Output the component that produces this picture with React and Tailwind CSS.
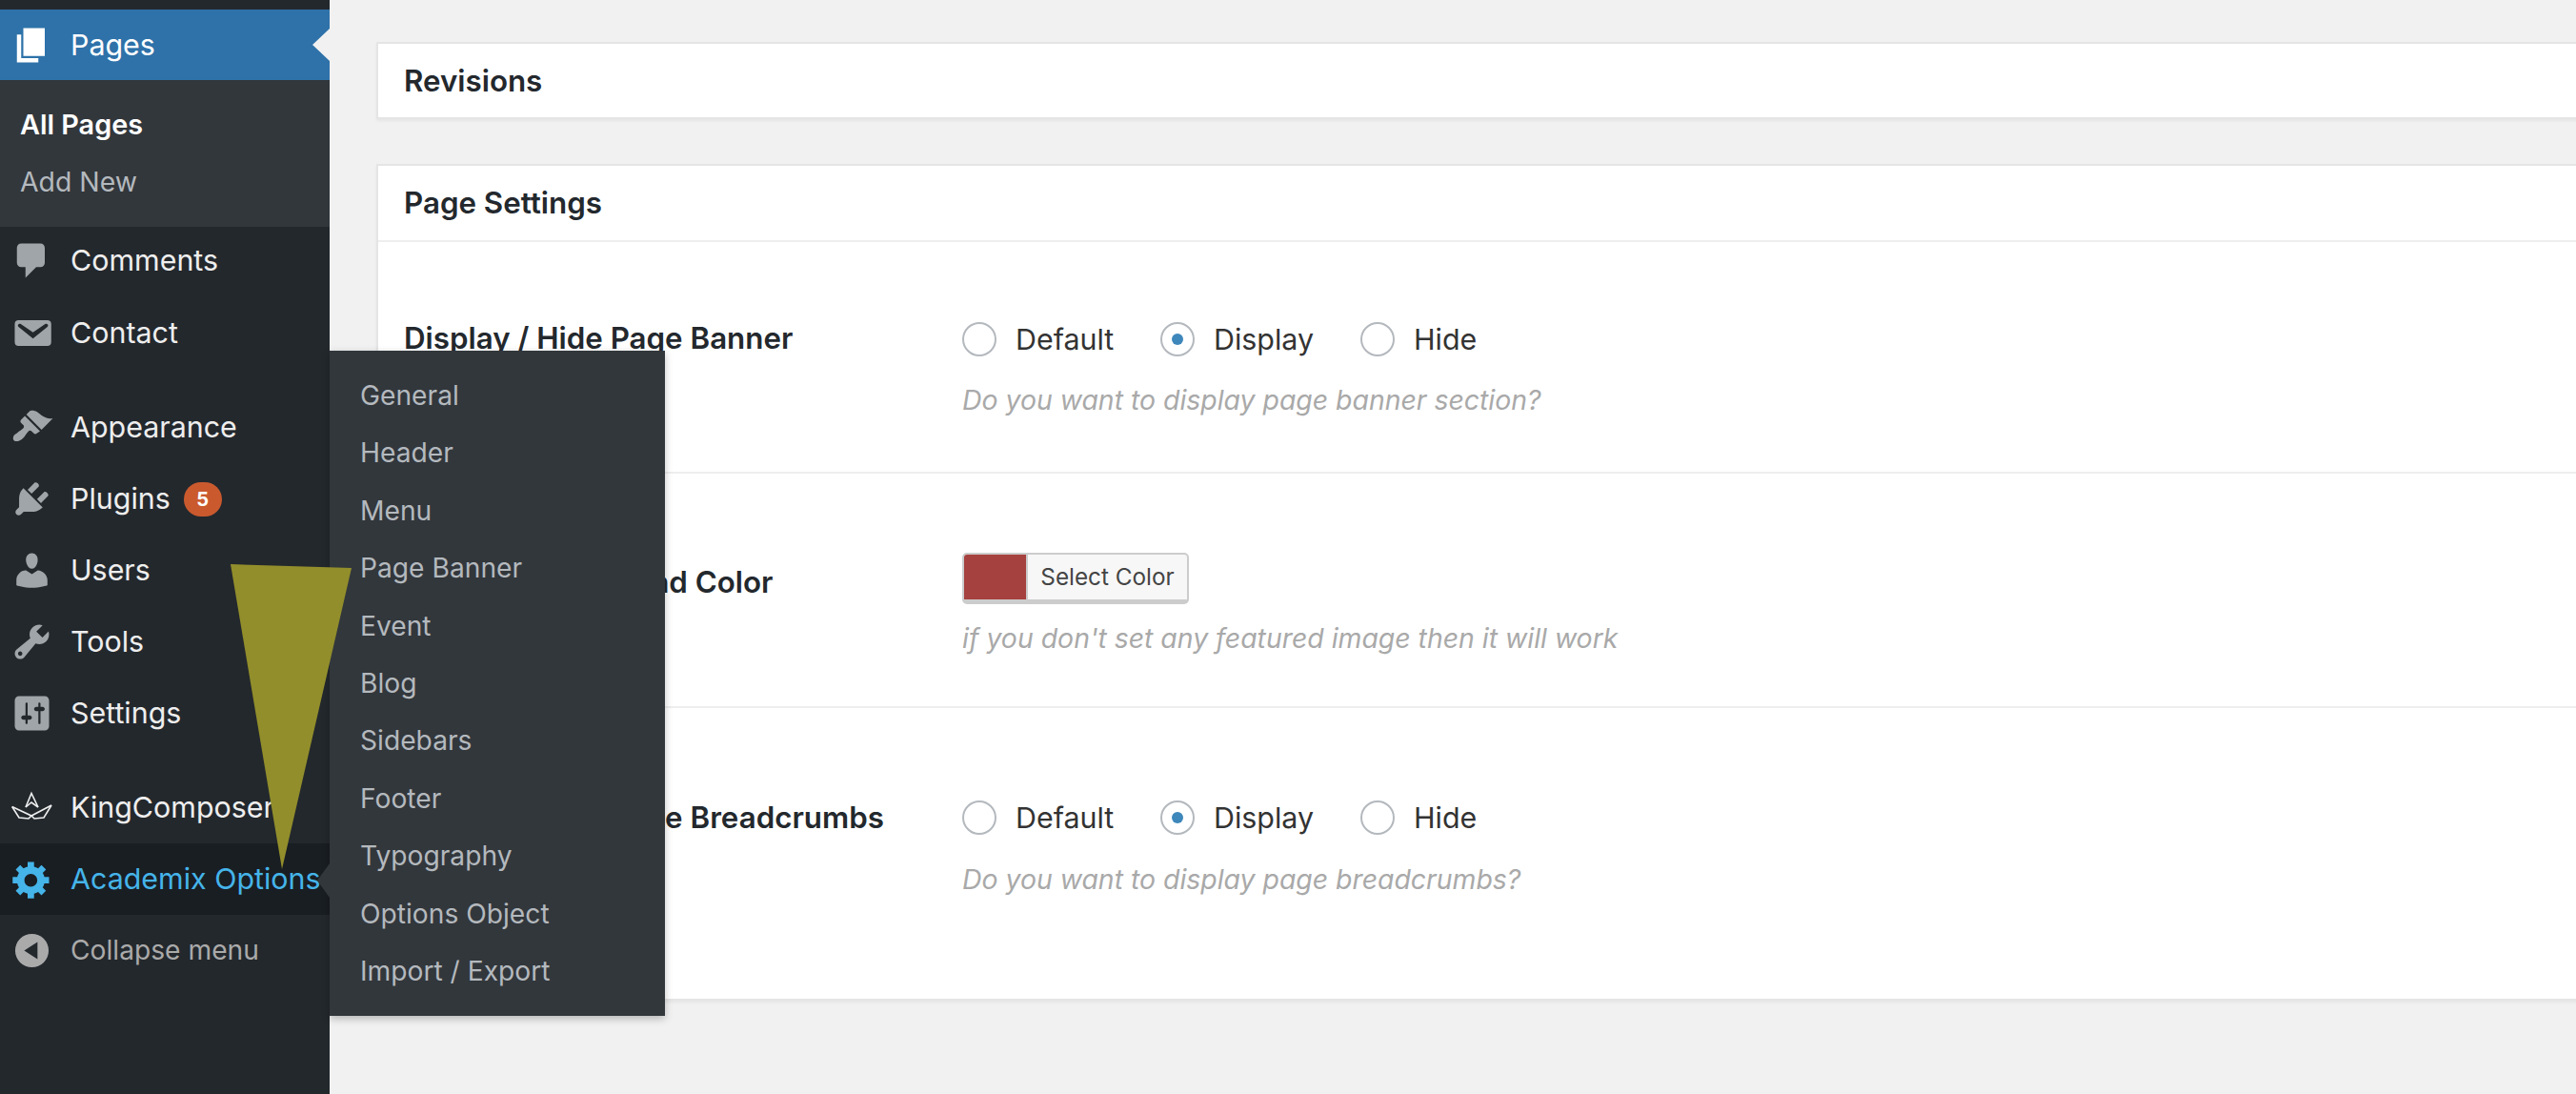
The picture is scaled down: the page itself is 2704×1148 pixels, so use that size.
import React from 'react';

const paths = {
  page: "M6 15V2h10v13H6zm-1 1h8v2H3V5h2v11z",
  comments: "M5 2h9c1.1 0 2 .9 2 2v7c0 1.1-.9 2-2 2h-2l-5 5v-5H5c-1.1 0-2-.9-2-2V4c0-1.1.9-2 2-2z",
  email: "M3.87 4h13.25C18.37 4 19 4.59 19 5.79v8.42c0 1.19-.63 1.79-1.88 1.79H3.87c-1.25 0-1.88-.6-1.88-1.79V5.79c0-1.2.63-1.79 1.88-1.79zm6.62 8.6l6.74-5.53c.24-.2.43-.66.13-1.07-.29-.41-.82-.42-1.17-.17l-5.7 3.86L4.8 5.83c-.35-.25-.88-.24-1.17.17-.3.41-.11.87.13 1.07z",
  brush: "M14.48 11.06L7.41 3.99l1.5-1.5c.5-.56 2.3-.47 3.51.32 1.21.8 1.43 1.28 2.91 2.1 1.18.64 2.45 1.26 4.45.85zm-.71.71L6.7 4.7 4.93 6.47c-.39.39-.39 1.02 0 1.41l1.06 1.06c.39.39.39 1.03 0 1.42-.6.6-1.43 1.11-2.21 1.69-.35.26-.7.53-1.01.84C1.43 13.23.78 15.24 1.65 16.1c.87.87 2.88.22 4.23-1.12.31-.31.58-.66.85-1.01.58-.78 1.09-1.61 1.69-2.21.39-.39 1.02-.39 1.41 0l1.06 1.06c.39.39 1.02.39 1.41 0z",
  plug: "M13.11 4.36L9.87 7.6 8 5.73l3.24-3.24c.35-.34 1.05-.2 1.56.32.52.51.66 1.21.31 1.55zm-8 1.77l.91-1.12 9.01 9.01-1.19.84c-.71.71-2.63 1.16-3.82 1.16H6.14L4.9 17.26c-.59.59-1.54.59-2.12 0-.59-.58-.59-1.53 0-2.12l1.24-1.24v-3.88c0-1.13.4-3.19 1.09-3.89zm7.26 3.97l3.24-3.24c.34-.35 1.04-.21 1.55.31.52.51.66 1.21.31 1.55l-3.24 3.25z",
  user: "M10 9.25c-2.27 0-2.73-3.44-2.73-3.44C7 4.02 7.82 2 9.97 2c2.16 0 2.98 2.02 2.71 3.81 0 0-.41 3.44-2.68 3.44zm0 2.57L12.72 10c2.39 0 4.52 2.33 4.52 4.53v2.49s-3.65 1.13-7.24 1.13c-3.65 0-7.24-1.13-7.24-1.13v-2.49c0-2.25 1.94-4.48 4.47-4.48z",
  wrench: "M16.68 9.77c-1.34 1.34-3.3 1.67-4.95.99l-5.41 6.52c-.99.99-2.59.99-3.58 0s-.99-2.59 0-3.57l6.52-5.42c-.68-1.65-.35-3.61.99-4.95 1.28-1.28 3.12-1.62 4.72-1.06l-2.89 2.89 2.82 2.82 2.86-2.87c.53 1.58.18 3.39-1.08 4.65zM3.81 16.21c.4.39 1.04.39 1.43 0 .4-.4.4-1.04 0-1.43-.39-.4-1.03-.4-1.43 0-.39.39-.39 1.03 0 1.43z",
  sliders: "M18 16V4c0-1.1-.9-2-2-2H4c-1.1 0-2 .9-2 2v12c0 1.1.9 2 2 2h12c1.1 0 2-.9 2-2zM8 11h1c.55 0 1 .45 1 1s-.45 1-1 1H8v1.5c0 .28-.22.5-.5.5s-.5-.22-.5-.5V13H6c-.55 0-1-.45-1-1s.45-1 1-1h1V5.5c0-.28.22-.5.5-.5s.5.22.5.5V11zm5-2h-1c-.55 0-1-.45-1-1s.45-1 1-1h1V5.5c0-.28.22-.5.5-.5s.5.22.5.5V7h1c.55 0 1 .45 1 1s-.45 1-1 1h-1v5.5c0 .28-.22.5-.5.5s-.5-.22-.5-.5V9z",
  gear: "M18 12h-2.18c-.17.7-.44 1.35-.81 1.93l1.54 1.54-2.1 2.1-1.54-1.54c-.58.36-1.23.63-1.91.79V19H8v-2.18c-.68-.16-1.33-.43-1.91-.79l-1.54 1.54-2.12-2.12 1.54-1.54c-.36-.58-.63-1.23-.79-1.91H1V9.03h2.17c.16-.7.44-1.35.8-1.94L2.43 5.55l2.1-2.1 1.54 1.54c.58-.37 1.24-.64 1.93-.81V2h3v2.18c.68.16 1.33.43 1.91.79l1.54-1.54 2.12 2.12-1.54 1.54c.36.59.64 1.24.8 1.94H18V12zm-8.5 1.5c1.66 0 3-1.34 3-3s-1.34-3-3-3-3 1.34-3 3 1.34 3 3 3z",
  collapse: "M10 2.2a7.8 7.8 0 1 0 0 15.6a7.8 7.8 0 0 0 0-15.6zM12.6 6v8L6.4 10z",
};

const Icon = ({ name, className }) => (
  <svg viewBox="0 0 20 20" className={"w-[45px] h-[45px] shrink-0 fill-current " + className}>
    <path fillRule="evenodd" d={paths[name]} />
  </svg>
);

const Crown = () => (
  <svg viewBox="0 0 45 45" className="w-[45px] h-[45px] shrink-0 fill-none stroke-[#eeeeee] stroke-[1.6]">
    <path d="M16 22 L22 7.5 L29 22" />
    <path d="M1.7 21.5 L9 33 L19 34 L22 31 L25 34 L35 33 L43 20" />
    <path d="M1.7 21.5 L22 31 L43 20" />
    <path d="M16 22 L22 17 L29 22" />
  </svg>
);

const MenuRow = ({ icon, label, iconClass = "text-[#a0a5aa]", textClass = "text-[#eeeeee] text-[30.4px]", className = "", children, custom }) => (
  <div className={"flex items-center h-[75px] pl-[11px] " + className}>
    {custom ? custom : <Icon name={icon} className={iconClass} />}
    <span className={"ml-[18px] leading-none whitespace-nowrap " + textClass}>{label}</span>
    {children}
  </div>
);

const flyoutItems = ["General", "Header", "Menu", "Page Banner", "Event", "Blog", "Sidebars", "Footer", "Typography", "Options Object", "Import / Export"];

const Radios = () => (
  <div className="flex items-center h-[36px] text-[30.4px] leading-none text-[#333333]">
    <span className="w-[36px] h-[36px] rounded-full border-2 border-[#b4b9be] bg-white" />
    <span className="ml-[20px] w-[152px]">Default</span>
    <span className="w-[36px] h-[36px] rounded-full border-2 border-[#b4b9be] bg-white flex items-center justify-center">
      <span className="w-[12px] h-[12px] rounded-full bg-[#3d87bb]" />
    </span>
    <span className="ml-[20px] w-[154px]">Display</span>
    <span className="w-[36px] h-[36px] rounded-full border-2 border-[#b4b9be] bg-white" />
    <span className="ml-[20px]">Hide</span>
  </div>
);

const Hint = ({ children }) => (
  <p className="text-[28.4px] leading-none italic text-[#a9a9a9] whitespace-nowrap">{children}</p>
);

const SettingRow = ({ label, hint, children, className = "", labelClass = "" }) => (
  <div className={"flex border-b-2 border-[#eeeeee] last:border-b-0 " + className}>
    <div className={"w-[613px] shrink-0 pl-[27px] h-[36px] flex items-center text-[31.3px] leading-none font-semibold text-[#23282d] whitespace-nowrap " + labelClass}>
      {label}
    </div>
    <div className="flex flex-col">
      {children}
      <Hint>{hint}</Hint>
    </div>
  </div>
);

export default function App() {
  return (
    <div className="relative flex w-[2704px] h-[1148px] overflow-hidden bg-[#f1f1f1] font-['Inter','Liberation_Sans',sans-serif]">
      <aside className="w-[346px] shrink-0 bg-[#23282d] pt-[10px]">
        <div className="relative flex items-center h-[74px] pl-[11px] bg-[#2e72a9]">
          <Icon name="page" className="text-white" />
          <span className="ml-[18px] text-[30.4px] leading-none text-white">Pages</span>
          <span className="absolute right-0 top-[20px] border-y-[17px] border-r-[18px] border-y-transparent border-r-[#f1f1f1]" />
        </div>
        <div className="h-[154px] bg-[#32373c] pl-[21px] pt-[33px] leading-none">
          <div className="h-[60px] text-[28.8px] font-semibold text-white">All Pages</div>
          <div className="text-[28.4px] text-[#b4b9be]">Add New</div>
        </div>
        <div className="pb-[23px]">
          <MenuRow icon="comments" label="Comments" className="h-[73px] pb-[4px]" />
          <MenuRow icon="email" label="Contact" className="pb-[2px]" />
        </div>
        <MenuRow icon="brush" label="Appearance" />
        <MenuRow icon="plug" label="Plugins">
          <span className="ml-[14px] flex items-center justify-center w-[40px] h-[36px] rounded-full bg-[#ca5a2e] text-white text-[20px] font-bold leading-none">5</span>
        </MenuRow>
        <MenuRow icon="user" label="Users" />
        <MenuRow icon="wrench" label="Tools" />
        <MenuRow icon="sliders" label="Settings" className="mb-[24px]" />
        <MenuRow custom={<Crown />} label="KingComposer" />
        <MenuRow icon="gear" label="Academix Options" iconClass="text-[#45b4e9]" textClass="text-[#45b4e9] text-[30.4px]" className="bg-[#191e23] h-[74px]" />
        <MenuRow icon="collapse" label="Collapse menu" iconClass="text-[#aaaaaa]" textClass="text-[#aaaaaa] text-[28.2px]" />
      </aside>

      <main className="flex-1 min-w-0 pl-[49px] pt-[44px]">
        <section className="-mr-[10px] h-[81px] border-2 border-[#e5e5e5] bg-white shadow-[0_2px_3px_rgba(0,0,0,0.05)] flex items-center pl-[27px] pt-[2px] text-[31.3px] font-semibold leading-none text-[#23282d]">
          Revisions
        </section>
        <section className="-mr-[10px] mt-[47px] h-[878px] border-2 border-[#e5e5e5] bg-white shadow-[0_2px_3px_rgba(0,0,0,0.05)]">
          <div className="h-[80px] flex items-center pl-[27px] pt-[2px] border-b-2 border-[#eeeeee] text-[31.3px] font-semibold leading-none text-[#23282d]">
            Page Settings
          </div>
          <SettingRow label="Display / Hide Page Banner" hint="Do you want to display page banner section?" className="h-[243px] pt-[84px]">
            <Radios />
            <div className="h-[32px]" />
          </SettingRow>
          <SettingRow label="Banner Background Color" hint="if you don't set any featured image then it will work" labelClass="mt-[14px]" className="h-[246px] pt-[83px]">
            <div className="flex w-[238px] h-[54px] rounded-[5px] border-2 border-b-[5px] border-[#cccccc] bg-[#f7f7f7] overflow-hidden">
              <span className="w-[67px] bg-[#a5413e] border-r-2 border-[#cccccc]" />
              <span className="flex-1 flex items-center justify-center text-[24.3px] leading-none text-[#444444]">Select Color</span>
            </div>
            <div className="h-[22px]" />
          </SettingRow>
          <SettingRow label="Display / Hide Page Breadcrumbs" hint="Do you want to display page breadcrumbs?" labelClass="mt-[1px]" className="pt-[97px]">
            <Radios />
            <div className="h-[33px]" />
          </SettingRow>
        </section>
      </main>

      {/* flyout submenu for the hovered item */}
      <div className="absolute left-[346px] top-[368px] w-[352px] h-[698px] bg-[#32373c] shadow-[0_3px_8px_rgba(0,0,0,0.25)] pt-[17px] pl-[32px] text-[28.2px] text-[#b4b9be]">
        {flyoutItems.map((item) => (
          <div key={item} className="h-[60.4px] flex items-center leading-none">{item}</div>
        ))}
      </div>
      <span className="absolute left-[333px] top-[906px] border-y-[18px] border-r-[13px] border-y-transparent border-r-[#32373c]" />

      {/* annotation arrow drawn over the screenshot */}
      <svg className="absolute left-0 top-0 w-[2704px] h-[1148px] pointer-events-none" viewBox="0 0 2704 1148">
        <polygon points="242,592 369,596 296,912" fill="#928e2b" />
      </svg>
    </div>
  );
}
